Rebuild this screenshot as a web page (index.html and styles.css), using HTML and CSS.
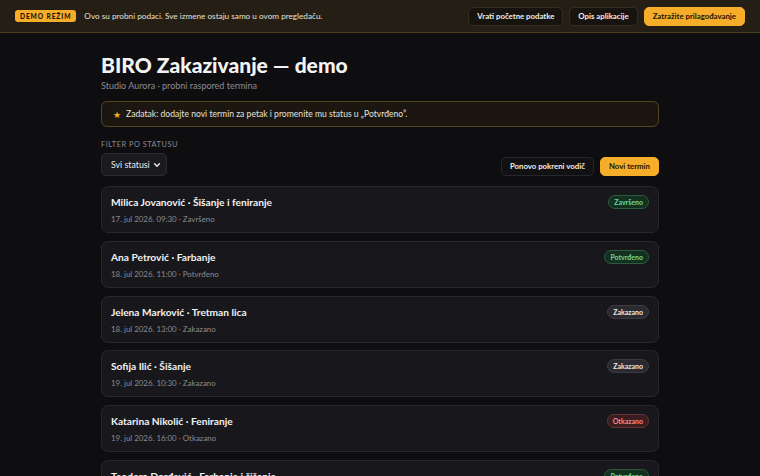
FILE: index.html
```html
<!DOCTYPE html>
<html lang="sr">
<head>
<meta charset="utf-8">
<title>BIRO Zakazivanje — demo</title>
<link rel="stylesheet" href="styles.css">
</head>
<body>
<header class="demo-bar">
  <div class="demo-left">
    <span class="demo-badge">DEMO REŽIM</span>
    <span class="demo-text">Ovo su probni podaci. Sve izmene ostaju samo u ovom pregledaču.</span>
  </div>
  <div class="demo-actions">
    <button class="btn btn-dark">Vrati početne podatke</button>
    <button class="btn btn-dark">Opis aplikacije</button>
    <button class="btn btn-amber">Zatražite prilagođavanje</button>
  </div>
</header>
<main class="page">
  <h1 class="title">BIRO Zakazivanje — demo</h1>
  <p class="subtitle">Studio Aurora · probni raspored termina</p>
  <div class="task"><span class="star">★</span><span>Zadatak: dodajte novi termin za petak i promenite mu status u „Potvrđeno”.</span></div>
  <div class="toolbar">
    <div class="filter">
      <label class="filter-label">FILTER PO STATUSU</label>
      <div class="select">
        <span>Svi statusi</span>
        <svg class="chev" viewBox="0 0 10 10" width="8" height="8"><path d="M2 3.5 L5 6.5 L8 3.5" fill="none" stroke="#e8e8ea" stroke-width="1.8" stroke-linecap="round" stroke-linejoin="round"/></svg>
      </div>
    </div>
    <div class="tool-actions">
      <button class="btn btn-dark">Ponovo pokreni vodič</button>
      <button class="btn btn-amber">Novi termin</button>
    </div>
  </div>
  <ul class="list">
    <li class="card"><div><div class="card-title">Milica Jovanović · Šišanje i feniranje</div><div class="card-meta">17. jul 2026. 09:30 · Završeno</div></div><span class="pill pill-green">Završeno</span></li>
    <li class="card"><div><div class="card-title">Ana Petrović · Farbanje</div><div class="card-meta">18. jul 2026. 11:00 · Potvrđeno</div></div><span class="pill pill-green">Potvrđeno</span></li>
    <li class="card"><div><div class="card-title">Jelena Marković · Tretman lica</div><div class="card-meta">18. jul 2026. 13:00 · Zakazano</div></div><span class="pill pill-gray">Zakazano</span></li>
    <li class="card"><div><div class="card-title">Sofija Ilić · Šišanje</div><div class="card-meta">19. jul 2026. 10:30 · Zakazano</div></div><span class="pill pill-gray">Zakazano</span></li>
    <li class="card"><div><div class="card-title">Katarina Nikolić · Feniranje</div><div class="card-meta">19. jul 2026. 16:00 · Otkazano</div></div><span class="pill pill-red">Otkazano</span></li>
    <li class="card"><div><div class="card-title">Teodora Đorđević · Farbanje i šišanje</div><div class="card-meta">20. jul 2026. 12:00 · Potvrđeno</div></div><span class="pill pill-green">Potvrđeno</span></li>
  </ul>
</main>
</body>
</html>
```
FILE: styles.css
```css
* { box-sizing: border-box; }
html, body { margin: 0; padding: 0; }
body {
  background: #0e0e11;
  color: #ececee;
  font-family: Lato, "Noto Sans", sans-serif;
  overflow: hidden;
  height: 476px;
}
button { font-family: inherit; cursor: pointer; }

.demo-bar {
  height: 33px;
  background: #251e15;
  border-bottom: 1px solid #4b3c22;
  display: flex;
  align-items: center;
  justify-content: space-between;
  padding: 0 15px 0 15px;
}
.demo-left { display: flex; align-items: center; gap: 8px; }
.demo-badge {
  background: #f6ad29;
  color: #1d1406;
  font-weight: 900;
  font-size: 6.6px;
  letter-spacing: 0.9px;
  padding: 0 5px;
  height: 12px;
  line-height: 12px;
  border-radius: 3px;
}
.demo-text { font-size: 8.2px; color: #e4e0d8; }
.demo-actions { display: flex; gap: 6px; }

.btn {
  height: 19px;
  padding: 0 8px;
  border-radius: 5px;
  font-size: 7.8px;
  font-weight: 700;
  line-height: 17px;
  white-space: nowrap;
}
.btn-dark { background: #17140f; color: #f0eee9; border: 1px solid #342c20; }
.btn-amber { background: #f6ad29; color: #1d1406; border: 1px solid #f6ad29; }

.page { width: 558px; margin: 0 auto; padding-top: 19px; }
.title { margin: 0; font-size: 21px; font-weight: 900; line-height: 26px; color: #f3f3f4; }
.subtitle { margin: 1px 0 0; font-size: 9px; color: #8c8c92; line-height: 13px; }

.task {
  margin-top: 9px;
  height: 26px;
  border: 1px solid #55451f;
  background: #1b1710;
  border-radius: 6px;
  display: flex;
  align-items: center;
  gap: 5px;
  padding: 0 11px;
  font-size: 8.6px;
  color: #e4e2de;
}
.star { color: #f6ad29; font-size: 9px; }

.toolbar { margin-top: 13px; display: flex; justify-content: space-between; align-items: flex-end; }
.filter-label { display: block; font-size: 7.4px; letter-spacing: 0.5px; color: #8a8a90; line-height: 10px; }
.select {
  margin-top: 3px;
  width: 66px;
  height: 23px;
  background: #1a1a1f;
  border: 1px solid #2a2a31;
  border-radius: 5px;
  display: flex;
  align-items: center;
  justify-content: space-between;
  padding: 0 5px 0 9px;
  font-size: 8.8px;
  color: #ececee;
  white-space: nowrap;
}
.tool-actions { display: flex; gap: 6px; }
.tool-actions .btn-dark { background: #111114; border-color: #26262c; }

.list { list-style: none; margin: 10px 0 0; padding: 0; display: flex; flex-direction: column; gap: 7.8px; }
.card {
  height: 47px;
  flex: none;
  background: #18181c;
  border: 1px solid #27272c;
  border-radius: 7px;
  display: flex;
  justify-content: space-between;
  align-items: flex-start;
  padding: 8px 9px 0 9px;
}
.card-title { font-size: 10.2px; font-weight: 700; color: #f2f2f3; line-height: 14px; }
.card-meta { font-size: 7.9px; color: #8a8a90; margin-top: 4px; line-height: 12px; }

.pill {
  font-size: 7px;
  font-weight: 700;
  padding: 0 5px;
  height: 14px;
  line-height: 12px;
  border-radius: 7px;
  border: 1px solid;
  white-space: nowrap;
}
.pill-green { background: #14301f; border-color: #2b5a3e; color: #6fd69c; }
.pill-gray { background: #2a2a30; border-color: #3a3a40; color: #e8e8ea; }
.pill-red { background: #3a1d1f; border-color: #673436; color: #f08c8c; }
```
